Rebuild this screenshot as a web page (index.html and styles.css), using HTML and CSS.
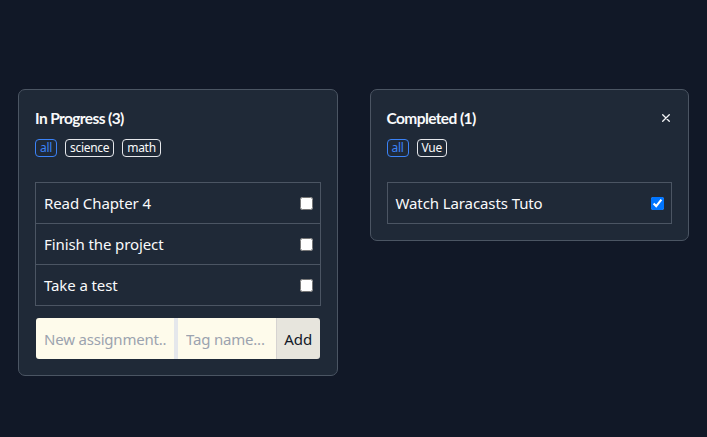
FILE: index.html
```html
<!DOCTYPE html>
<html>
<head>
<meta charset="utf-8">
<link rel="stylesheet" href="styles.css">
</head>
<body>
<main class="board">
  <section class="card">
    <header class="card-head">
      <h2 class="title">In Progress (3)</h2>
    </header>
    <div class="tags">
      <span class="tag active">all</span>
      <span class="tag">science</span>
      <span class="tag">math</span>
    </div>
    <ul class="list">
      <li class="item"><label>Read Chapter 4</label><input type="checkbox" class="check"></li>
      <li class="item"><label>Finish the project</label><input type="checkbox" class="check"></li>
      <li class="item"><label>Take a test</label><input type="checkbox" class="check"></li>
    </ul>
    <form class="add-form">
      <input class="field field-name" type="text" placeholder="New assignment...">
      <input class="field field-tag" type="text" placeholder="Tag name...">
      <button type="button" class="add-btn">Add</button>
    </form>
  </section>
  <section class="card">
    <header class="card-head">
      <h2 class="title">Completed (1)</h2>
      <button type="button" class="close" aria-label="Close">
        <svg width="8" height="8" viewBox="0 0 8 8"><path d="M0.7 0.7L7.3 7.3M7.3 0.7L0.7 7.3" stroke="#f3f4f6" stroke-width="1.3" stroke-linecap="round"/></svg>
      </button>
    </header>
    <div class="tags">
      <span class="tag active">all</span>
      <span class="tag">Vue</span>
    </div>
    <ul class="list">
      <li class="item"><label>Watch Laracasts Tuto</label><input type="checkbox" class="check" checked></li>
    </ul>
  </section>
</main>
</body>
</html>
```

FILE: styles.css
```css
* { box-sizing: border-box; }
html, body { margin: 0; padding: 0; }
body {
  background: #111827;
  color: #f9fafb;
  font-family: "Noto Sans", "Open Sans", sans-serif;
  height: 437px;
}
.board {
  display: flex;
  align-items: flex-start;
  gap: 32px;
  padding: 89px 18px 0 18px;
}
.card {
  width: 320px;
  background: #1f2937;
  border: 1px solid #4b5563;
  border-radius: 7px;
  padding: 16px;
}
.card-head {
  display: flex;
  justify-content: space-between;
  align-items: center;
  height: 24px;
}
.title {
  margin: 0;
  font-family: Lato, "Noto Sans", sans-serif;
  font-size: 15.5px;
  font-weight: 700;
  line-height: 24px;
  letter-spacing: -0.6px;
  color: #f9fafb;
}
.close {
  background: none;
  border: 0;
  padding: 0;
  margin-right: 2px;
  width: 8px;
  height: 8px;
  display: flex;
}
.tags {
  display: flex;
  gap: 8px;
  margin-top: 9px;
}
.tag {
  font-size: 12px;
  line-height: 14px;
  padding: 1px 4px;
  border: 1px solid #e5e7eb;
  border-radius: 4px;
  color: #f9fafb;
  letter-spacing: -0.3px;
}
.tag.active {
  border-color: #3b82f6;
  color: #3b82f6;
}
.list {
  list-style: none;
  margin: 25px 0 0 0;
  padding: 0;
  border: 1px solid #4b5563;
}
.item {
  box-sizing: content-box;
  display: flex;
  align-items: center;
  justify-content: space-between;
  height: 40px;
  padding: 0 7px 0 8px;
  font-size: 15px;
  color: #f9fafb;
}
.item + .item { border-top: 1px solid #4b5563; }
.item label { letter-spacing: -0.1px; }
.check { width: 13px; height: 13px; margin: 0; }
.add-form {
  display: flex;
  margin: 12px 1px 0 1px;
  height: 41px;
  border-radius: 3px;
  overflow: hidden;
}
.field {
  border: 0;
  background: #fefbeb;
  font-family: inherit;
  font-size: 15px;
  letter-spacing: -0.2px;
  color: #111827;
  padding: 0 8px;
  outline: none;
  min-width: 0;
}
.field::placeholder { color: #9ca3af; }
.field-name { width: 142px; border-right: 4px solid #e5e7eb; }
.field-tag { width: 98px; }
.add-btn {
  flex: 1;
  border: 0;
  border-left: 1px solid #d6d3d1;
  background: #e7e5dd;
  font-family: inherit;
  font-size: 15px;
  color: #111827;
  padding: 0;
}
```
